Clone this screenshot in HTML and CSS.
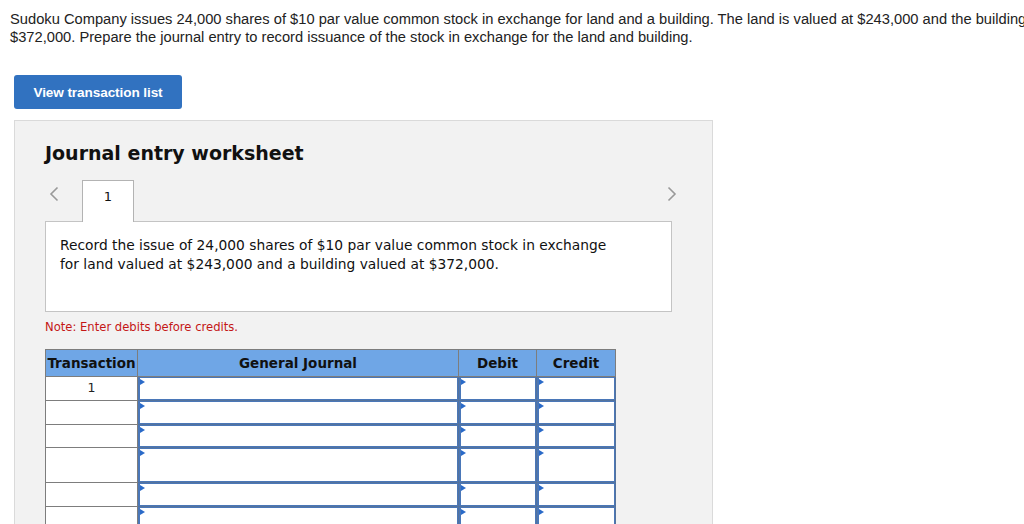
FILE: index.html
```html
<!DOCTYPE html>
<html>
<head>
<meta charset="utf-8">
<link rel="stylesheet" href="styles.css">
</head>
<body>
<div class="question">Sudoku Company issues 24,000 shares of $10 par value common stock in exchange for land and a building. The land is valued at $243,000 and the building is valued at<br>$372,000. Prepare the journal entry to record issuance of the stock in exchange for the land and building.</div>
<div class="btn-row"><button class="btn">View transaction list</button></div>
<div class="panel">
  <h2 class="title">Journal entry worksheet</h2>
  <div class="nav">
    <span class="arrow left"><svg width="10" height="16" viewBox="0 0 10 16"><path d="M8.5 1.5 L2 8 L8.5 14.5" fill="none" stroke="#999" stroke-width="1.6"/></svg></span>
    <div class="tab">1</div>
    <span class="spacer"></span>
    <span class="arrow right"><svg width="10" height="16" viewBox="0 0 10 16"><path d="M1.5 1.5 L8 8 L1.5 14.5" fill="none" stroke="#999" stroke-width="1.6"/></svg></span>
  </div>
  <div class="desc">Record the issue of 24,000 shares of $10 par value common stock in exchange<br>for land valued at $243,000 and a building valued at $372,000.</div>
  <p class="note">Note: Enter debits before credits.</p>
  <table class="journal">
    <colgroup><col class="c-tr"><col class="c-gj"><col class="c-dr"><col class="c-cr"></colgroup>
    <thead>
      <tr><th>Transaction</th><th>General Journal</th><th>Debit</th><th>Credit</th></tr>
    </thead>
    <tbody>
      <tr class="r24"><td class="tr">1</td><td class="in"><div class="box"></div></td><td class="in"><div class="box"></div></td><td class="in"><div class="box"></div></td></tr>
      <tr class="r24"><td class="tr"></td><td class="in"><div class="box"></div></td><td class="in"><div class="box"></div></td><td class="in"><div class="box"></div></td></tr>
      <tr class="r23"><td class="tr"></td><td class="in"><div class="box"></div></td><td class="in"><div class="box"></div></td><td class="in"><div class="box"></div></td></tr>
      <tr class="r35"><td class="tr"></td><td class="in"><div class="box"></div></td><td class="in"><div class="box"></div></td><td class="in"><div class="box"></div></td></tr>
      <tr class="r24"><td class="tr"></td><td class="in"><div class="box"></div></td><td class="in"><div class="box"></div></td><td class="in"><div class="box"></div></td></tr>
      <tr class="r24"><td class="tr"></td><td class="in"><div class="box"></div></td><td class="in"><div class="box"></div></td><td class="in"><div class="box"></div></td></tr>
    </tbody>
  </table>
</div>
</body>
</html>
```

FILE: styles.css
```css
html, body {
  margin: 0;
  padding: 0;
  background: #fff;
  overflow: hidden;
  height: 524px;
}
.question {
  padding: 10px 0 0 10px;
  font-family: "Liberation Sans", Arial, sans-serif;
  font-size: 14.7px;
  line-height: 18px;
  color: #222;
  white-space: nowrap;
  overflow: hidden;
}
.btn-row {
  padding: 29px 0 0 14px;
}
.btn {
  display: block;
  width: 168px;
  height: 34px;
  border: 0;
  border-radius: 3px;
  background: #3172c0;
  color: #fff;
  font-family: "Liberation Sans", Arial, sans-serif;
  font-weight: bold;
  font-size: 13.6px;
  letter-spacing: -0.1px;
  padding: 0;
}
.panel {
  margin: 11px 0 0 14px;
  width: 699px;
  height: 420px;
  background: #f2f2f2;
  border: 1px solid #dadada;
  padding: 20px 0 0 30px;
  box-sizing: border-box;
  font-family: "DejaVu Sans", Verdana, sans-serif;
}
.title {
  margin: 0;
  font-size: 19px;
  line-height: 24px;
  font-weight: bold;
  color: #111;
}
.nav {
  display: flex;
  align-items: flex-start;
  margin-top: 15px;
  width: 632px;
  height: 42px;
  position: relative;
  z-index: 2;
}
.arrow {
  display: flex;
  padding-top: 6px;
}
.arrow.left {
  padding-left: 4px;
  width: 33px;
}
.spacer { flex: 1; }
.tab {
  width: 52px;
  height: 42px;
  box-sizing: border-box;
  border: 1px solid #b3b3b3;
  border-bottom: 0;
  background: #fff;
  text-align: center;
  font-size: 13px;
  line-height: 30px;
  color: #111;
  padding-top: 1px;
}
.desc {
  position: relative;
  z-index: 1;
  margin-top: -1px;
  width: 627px;
  height: 91px;
  box-sizing: border-box;
  border: 1px solid #c4c4c4;
  background: #fff;
  padding: 14px 0 0 14px;
  font-size: 13.8px;
  line-height: 19px;
  color: #111;
}
.note {
  margin: 8px 0 0 0;
  font-size: 11.6px;
  line-height: 14px;
  color: #c41616;
}
.journal {
  margin-top: 15px;
  border-collapse: collapse;
  table-layout: fixed;
  width: 570px;
}
.c-tr { width: 92px; }
.c-gj { width: 321px; }
.c-dr { width: 78px; }
.c-cr { width: 79px; }
.journal th {
  background: #6fa6e6;
  border: 1px solid #7d7d7d;
  height: 26px;
  padding: 0;
  font-size: 13.5px;
  font-weight: bold;
  color: #111;
  text-align: center;
}
.journal td {
  padding: 0;
  border: 1px solid #7d7d7d;
  background: #fff;
  vertical-align: top;
  line-height: 0;
}
.journal td.tr {
  text-align: center;
  font-size: 12.5px;
  line-height: 14px;
  color: #222;
  padding-top: 4px;
}
.journal td.in {
  border-color: #55739c;
}
.box {
  position: relative;
  height: 23px;
  box-sizing: border-box;
  border: 1px solid #4a77b8;
  border-left-width: 2px;
}
.r23 .box { height: 22px; }
.r35 .box { height: 34px; }
.box::before {
  content: "";
  position: absolute;
  left: 0;
  top: 1px;
  border-left: 5px solid #2a6ac8;
  border-top: 3px solid transparent;
  border-bottom: 3px solid transparent;
}
```
